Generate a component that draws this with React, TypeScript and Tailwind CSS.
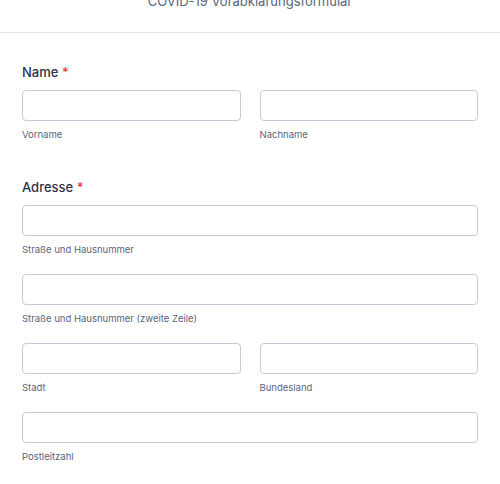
import React from 'react';

const font = { fontFamily: 'Inter, "Noto Sans", sans-serif' };

interface FieldProps {
    sublabel: string;
}

const Field: React.FC<FieldProps> = ({ sublabel }) => (
    <div className="flex flex-col flex-1 min-w-0">
        <input type="text" className="h-[31px] w-full rounded-[4px] border border-[#c3cad8] bg-white outline-none" />
        <span className="mt-[6px] h-[16px] text-[9.5px] leading-[16px] text-[#57647e]">{sublabel}</span>
    </div>
);

const Label: React.FC<{ text: string }> = ({ text }) => (
    <label className="block h-[20px] text-[13px] leading-[20px] font-medium text-[#2c3345]">
        {text} <span className="text-[#f23a3c]">*</span>
    </label>
);

const App: React.FC = () => {
    return (
        <div className="w-[500px] h-[484px] overflow-hidden bg-white" style={font}>
            <div className="border-b border-[#e6e6f2] h-[33px] overflow-hidden">
                <h1 className="-mt-[7px] text-center text-[13px] leading-[16px] text-[#57647e]">
                    COVID-19 Vorabklärungsformular
                </h1>
            </div>

            <div className="px-[22px] pt-[29px] flex flex-col">
                <Label text="Name" />
                <div className="mt-[8px] flex gap-[19px]">
                    <Field sublabel="Vorname" />
                    <Field sublabel="Nachname" />
                </div>

                <div className="mt-[34px]">
                    <Label text="Adresse" />
                </div>
                <div className="mt-[8px] flex flex-col gap-[16px]">
                    <Field sublabel="Straße und Hausnummer" />
                    <Field sublabel="Straße und Hausnummer (zweite Zeile)" />
                    <div className="flex gap-[19px]">
                        <Field sublabel="Stadt" />
                        <Field sublabel="Bundesland" />
                    </div>
                    <Field sublabel="Postleitzahl" />
                </div>
            </div>
        </div>
    );
};

export default App;
